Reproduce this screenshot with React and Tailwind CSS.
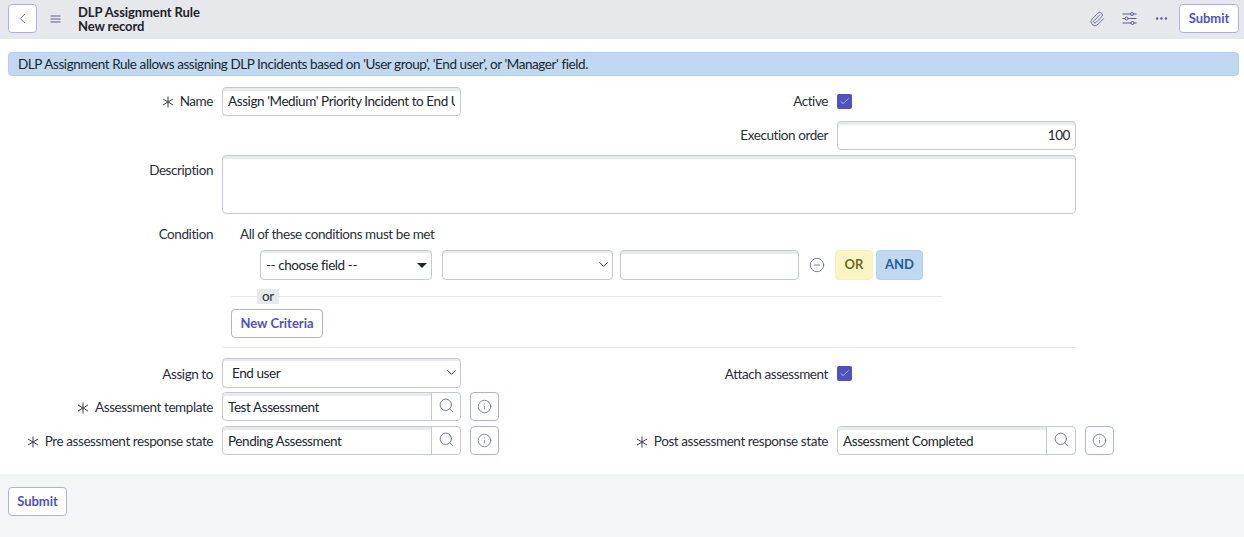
import { ChevronLeft, ChevronDown, Paperclip, Ellipsis, Search, Info, CircleMinus, Check } from 'lucide-react';

const textCls = 'text-[13.5px] tracking-[-0.42px]';
const inputCls = `w-full h-full bg-white border border-[#c6c8d4] rounded-[4px] shadow-[inset_0_3px_0_#e9eaee] px-[5px] pt-0 pb-[2px] ${textCls} text-[#22252b] outline-none`;

const Star = () => (
  <svg width="12" height="12" viewBox="0 0 12 12" className="mr-[6px] shrink-0 text-[#3c3f48]" fill="none" stroke="currentColor" strokeWidth="1">
    <path d="M6 0.5V11.5M1 3L11 9M11 3L1 9" />
  </svg>
);

const MenuIcon = () => (
  <svg width="11" height="8" viewBox="0 0 11 8" className="ml-[13px] mb-[2px] text-[#5a5e94]" fill="none" stroke="currentColor" strokeWidth="1.1">
    <path d="M0.5 1H10.5M0.5 4H10.5M0.5 7H10.5" />
  </svg>
);

const SlidersIcon = () => (
  <svg width="15" height="13" viewBox="0 0 15 13" className="ml-[17px] text-[#585c8e]" fill="none" stroke="currentColor" strokeWidth="1">
    <path d="M0.5 2H14.5M0.5 6.5H14.5M0.5 11H14.5" />
    <circle cx="10" cy="2" r="1.5" fill="#e7e8ec" />
    <circle cx="4.5" cy="6.5" r="1.5" fill="#e7e8ec" />
    <circle cx="10.5" cy="11" r="1.5" fill="#e7e8ec" />
  </svg>
);

const Field = ({ label, required, labelClass, children }) => (
  <div className="w-[615px] flex items-center">
    <div className={`w-[213px] flex items-center justify-end ${textCls} text-[#2b2e35] whitespace-nowrap ${labelClass || ''}`}>
      {required && <Star />}
      {label}
    </div>
    <div className="ml-[9px] flex items-center flex-1 h-full">{children}</div>
  </div>
);

const Checkbox = ({ className }) => (
  <div className={`w-[15px] h-[15px] rounded-[2px] bg-[#4f52bd] flex items-center justify-center text-[#dfe0f5] ${className || ''}`}>
    <Check size={11} strokeWidth={1.5} />
  </div>
);

const SelectBox = ({ value, width, solidArrow, pad }) => (
  <div className={`relative h-full ${width}`}>
    <select
      value={value}
      onChange={() => {}}
      className={`w-full h-full appearance-none bg-white border border-[#c6c8d4] rounded-[4px] shadow-[inset_0_2px_0_#e9eaee] pt-px ${textCls} text-[#22252b] outline-none ${pad}`}
    >
      <option value={value}>{value}</option>
    </select>
    {solidArrow ? (
      <div className="absolute right-[5px] top-[13px] w-0 h-0 border-x-[5px] border-x-transparent border-t-[5px] border-t-[#22252b]" />
    ) : (
      <ChevronDown size={15} strokeWidth={1.6} className="absolute right-[2px] top-[7px] text-[#33363e]" />
    )}
  </div>
);

const Lookup = ({ value }) => (
  <>
    <div className="w-[239px] h-full flex bg-white border border-[#c6c8d4] rounded-[4px]">
      <input
        readOnly
        value={value}
        className={`flex-1 min-w-0 h-full border-r border-[#c6c8d4] rounded-l-[4px] shadow-[inset_0_3px_0_#e9eaee] px-[5px] ${textCls} text-[#22252b] outline-none`}
      />
      <div className="w-[28px] shrink-0 flex items-center justify-center text-[#5659c4]">
        <Search size={17} strokeWidth={1.2} className="mb-[2px]" />
      </div>
    </div>
    <div className="ml-[9px] w-[29px] h-[29px] border border-[#aeb0e2] rounded-[4px] bg-white flex items-center justify-center text-[#5659c4]">
      <Info size={15} strokeWidth={1.2} />
    </div>
  </>
);

const App = () => {
  return (
    <div className="w-[1244px] h-[537px] bg-white overflow-hidden flex flex-col font-['Lato','Open_Sans',sans-serif]">
      <header className="h-[39px] shrink-0 bg-[#e7e8ec] flex items-center pl-[8px] pr-[5px]">
        <button className="w-[29px] h-[29px] mb-[2px] bg-white border border-[#aeb0e2] rounded-[4px] flex items-center justify-center text-[#5659c4]">
          <ChevronLeft size={17} strokeWidth={1.3} />
        </button>
        <MenuIcon />
        <div className="ml-[17px] mb-[2px] text-[13px] leading-[14px] tracking-[-0.1px] font-bold text-[#1f2228]">
          <div>DLP Assignment Rule</div>
          <div>New record</div>
        </div>
        <div className="ml-auto mb-[2px] flex items-center text-[#585c8e]">
          <Paperclip size={16} strokeWidth={1.3} />
          <SlidersIcon />
          <Ellipsis size={15} strokeWidth={2} className="ml-[17px]" />
          <button className="ml-[10px] w-[60px] h-[29px] bg-white border border-[#aeb0e2] rounded-[4px] text-[13px] font-bold text-[#4f52bd]">
            Submit
          </button>
        </div>
      </header>

      <div className={`ml-[8px] mr-[5px] mt-[13px] h-[24px] shrink-0 bg-[#c0d9f0] border border-[#b1d1ee] rounded-[4px] flex items-center px-[9px] ${textCls} text-[#22252b]`}>
        DLP Assignment Rule allows assigning DLP Incidents based on 'User group', 'End user', or 'Manager' field.
      </div>

      <main className="flex-1 flex flex-col pt-[11px]">
        <div className="flex h-[29px]">
          <Field label="Name" required>
            <div className="w-[239px] h-full">
              <input readOnly value="Assign 'Medium' Priority Incident to End User" className={inputCls} />
            </div>
          </Field>
          <Field label="Active">
            <Checkbox />
          </Field>
        </div>

        <div className="flex h-[29px] mt-[5px]">
          <div className="w-[615px]" />
          <Field label="Execution order">
            <div className="w-[239px] h-full">
              <input readOnly value="100" className={`${inputCls} text-right`} />
            </div>
          </Field>
        </div>

        <div className="flex mt-[5px] h-[59px]">
          <div className={`w-[213px] pt-[5px] text-right ${textCls} text-[#2b2e35]`}>Description</div>
          <div className="ml-[9px] w-[854px] h-full bg-white border border-[#c6c8d4] rounded-[4px] shadow-[inset_0_3px_0_#e9eaee]" />
        </div>

        <div className="flex mt-[11px]">
          <div className={`w-[213px] text-right ${textCls} leading-[18px] text-[#2b2e35]`}>Condition</div>
          <div className="ml-[9px] w-[854px]">
            <div className={`pl-[18px] ${textCls} leading-[18px] text-[#2b2e35]`}>All of these conditions must be met</div>
            <div className="flex items-center h-[30px] mt-[7px] pl-[38px]">
              <SelectBox value="-- choose field --" width="w-[172px]" solidArrow pad="pl-[5px]" />
              <SelectBox value="" width="w-[171px] ml-[10px]" pad="pl-[5px]" />
              <div className="w-[179px] h-full ml-[7px]">
                <input readOnly value="" className={inputCls} />
              </div>
              <CircleMinus size={16} strokeWidth={1.2} className="ml-[10px] text-[#5a5e94]" />
              <div className="ml-[10px] w-[38px] h-full bg-[#faf6c3] border border-[#f6f1bd] rounded-[4px] flex items-center justify-center text-[13px] font-bold text-[#706a26]">
                OR
              </div>
              <div className="ml-[3px] w-[47px] h-full bg-[#c0d9f0] border border-[#b1d1ee] rounded-[4px] flex items-center justify-center text-[13px] font-bold text-[#265b94]">
                AND
              </div>
            </div>
            <div className="relative mt-[16px] ml-[9px] w-[711px] border-t border-[#e6e7eb]">
              <span className={`absolute left-[26px] -top-[8px] h-[15px] px-[5px] bg-[#e7e8ec] ${textCls} leading-[15px] text-[#2b2e35]`}>or</span>
            </div>
            <button className="block mt-[12px] ml-[9px] w-[92px] h-[29px] bg-white border border-[#aeb0e2] rounded-[4px] text-[13px] font-bold text-[#4f52bd]">
              New Criteria
            </button>
            <div className="mt-[9px] border-t border-[#e6e7eb]" />
          </div>
        </div>

        <div className="flex h-[30px] mt-[10px]">
          <Field label="Assign to" labelClass="pt-[2px]">
            <SelectBox value="End user" width="w-[239px]" pad="pl-[9px]" />
          </Field>
          <Field label="Attach assessment" labelClass="pt-[2px]">
            <Checkbox className="mt-[1px]" />
          </Field>
        </div>

        <div className="flex h-[29px] mt-[4px]">
          <Field label="Assessment template" required labelClass="pt-[2px]">
            <Lookup value="Test Assessment" />
          </Field>
        </div>

        <div className="flex h-[29px] mt-[5px]">
          <Field label="Pre assessment response state" required labelClass="pt-[2px]">
            <Lookup value="Pending Assessment" />
          </Field>
          <Field label="Post assessment response state" required labelClass="pt-[2px]">
            <Lookup value="Assessment Completed" />
          </Field>
        </div>
      </main>

      <footer className="h-[63px] shrink-0 bg-[#f4f5f7] pt-[13px] pl-[8px]">
        <button className="block w-[59px] h-[29px] bg-white border border-[#aeb0e2] rounded-[4px] text-[13px] font-bold text-[#4f52bd]">
          Submit
        </button>
      </footer>
    </div>
  );
};

export default App;
